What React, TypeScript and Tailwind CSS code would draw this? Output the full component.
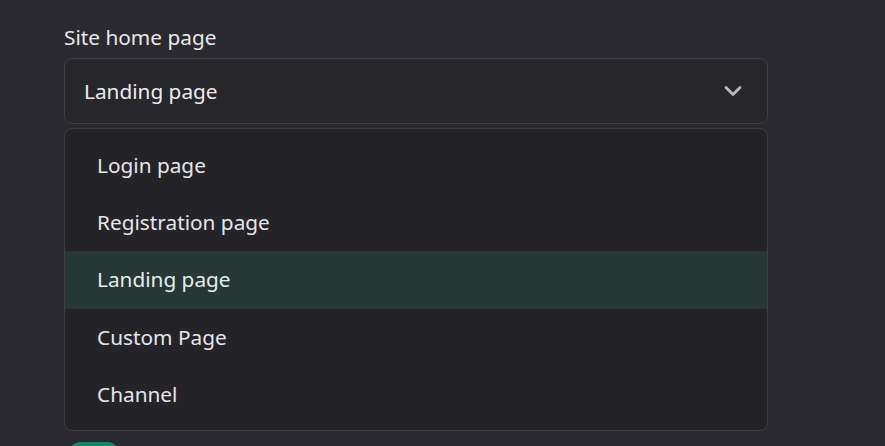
import { ChevronDown } from "lucide-react";

const options = ["Login page", "Registration page", "Landing page", "Custom Page", "Channel"];
const selected = "Landing page";

export default function App() {
  return (
    <div
      className="min-h-screen bg-[#2a292f] text-[#e8e8ea] overflow-hidden"
      style={{ fontFamily: '"Noto Sans", "Open Sans", sans-serif' }}
    >
      <div className="relative w-[704px] ml-[64px] pt-[22px]">
        <div className="text-[20.8px] leading-[30px] mb-[6px]">Site home page</div>
        <div className="relative">
          <button className="flex w-full h-[66px] items-center justify-between rounded-[8px] border border-[#3f3e45] bg-[#27262b] pl-[19px] pr-[20px] text-[20.8px] text-[#ececee]">
            <span className="pt-[1px]">{selected}</span>
            <ChevronDown className="h-[28px] w-[28px] text-[#b9b9bf]" strokeWidth={2.4} />
          </button>
          {/* menu */}
          <div className="absolute left-0 right-0 top-[70px] z-10 rounded-[8px] border border-[#3f3e45] bg-[#242328] pt-[8px] pb-[7px]">
            {options.map((o) => (
              <div
                key={o}
                className={`flex h-[57.2px] items-center pl-[32px] text-[20.8px] ${
                  o === selected ? "bg-[#263836] text-[#e6ecea]" : "text-[#e6e6e8]"
                }`}
              >
                {o}
              </div>
            ))}
          </div>
        </div>
        <div className="h-[318px]" />
        <div className="ml-[4px] h-[26px] w-[52px] rounded-full bg-[#13876a]" />
      </div>
    </div>
  );
}
